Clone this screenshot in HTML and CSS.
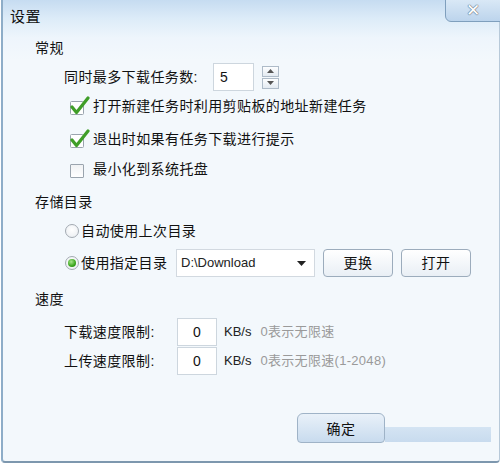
FILE: index.html
```html
<!DOCTYPE html>
<html lang="zh-CN">
<head>
<meta charset="utf-8">
<title>设置</title>
<link rel="stylesheet" href="styles.css">
</head>
<body>
<div class="window">
  <div class="close"><span class="x">✕</span></div>
  <div class="title">设置</div>

  <div class="heading">常规</div>
  <div class="row spin-row">
    <span class="label">同时最多下载任务数:</span>
    <div class="input num-left">5</div>
    <div class="spinner">
      <div class="spin-btn"><svg width="7" height="4" viewBox="0 0 7 4"><path d="M0 4 L3.5 0 L7 4 Z" fill="#555"/></svg></div>
      <div class="spin-btn"><svg width="7" height="4" viewBox="0 0 7 4"><path d="M0 0 L3.5 4 L7 0 Z" fill="#555"/></svg></div>
    </div>
  </div>
  <div class="row cb-row r1">
    <span class="check"><svg width="22" height="20" viewBox="0 0 22 20"><rect x="2.5" y="5.5" width="13" height="13" rx="1" fill="#fff" stroke="#9aa4ae"/><path d="M4 11 L8.5 16.5 L20 2" fill="none" stroke="#3f9e28" stroke-width="3.2" stroke-linecap="round" stroke-linejoin="round"/></svg></span>
    <span>打开新建任务时利用剪贴板的地址新建任务</span>
  </div>
  <div class="row cb-row r2">
    <span class="check"><svg width="22" height="20" viewBox="0 0 22 20"><rect x="2.5" y="5.5" width="13" height="13" rx="1" fill="#fff" stroke="#9aa4ae"/><path d="M4 11 L8.5 16.5 L20 2" fill="none" stroke="#3f9e28" stroke-width="3.2" stroke-linecap="round" stroke-linejoin="round"/></svg></span>
    <span>退出时如果有任务下载进行提示</span>
  </div>
  <div class="row cb-row r3">
    <span class="check"><span class="box"></span></span>
    <span>最小化到系统托盘</span>
  </div>

  <div class="heading h2">存储目录</div>
  <div class="row radio-row">
    <span class="radio"></span>
    <span>自动使用上次目录</span>
  </div>
  <div class="row radio-row rr2">
    <span class="radio on"><span class="dot"></span></span>
    <span class="rlabel">使用指定目录</span>
    <div class="select"><span>D:\Download</span><svg width="9" height="5" viewBox="0 0 9 5"><path d="M0 0 L4.5 5 L9 0 Z" fill="#222"/></svg></div>
    <div class="btn">更换</div>
    <div class="btn">打开</div>
  </div>

  <div class="heading h3">速度</div>
  <div class="row speed-row s1">
    <span class="label">下载速度限制:</span>
    <div class="input num-center">0</div>
    <span class="unit">KB/s</span>
    <span class="hint">0表示无限速</span>
  </div>
  <div class="row speed-row s2">
    <span class="label">上传速度限制:</span>
    <div class="input num-center">0</div>
    <span class="unit">KB/s</span>
    <span class="hint">0表示无限速(1-2048)</span>
  </div>

  <div class="footer">
    <div class="ok">确定</div>
    <div class="strip"></div>
  </div>
</div>
</body>
</html>
```
FILE: styles.css
```css
html, body {
  margin: 0;
  padding: 0;
  background: #ffffff;
}
body {
  width: 500px;
  height: 469px;
  overflow: hidden;
  font-family: "Liberation Sans", "Noto Sans CJK SC", sans-serif;
  font-size: 14px;
  letter-spacing: 0.4px;
  color: #111;
}
.window {
  position: relative;
  box-sizing: border-box;
  width: 499px;
  height: 463px;
  margin-left: 1px;
  border-left: 2px solid #8eadc8;
  border-bottom: 2px solid #7d97ae;
  border-right: 1px solid #b7c9d9;
  border-bottom-left-radius: 4px;
  border-bottom-right-radius: 4px;
  background: linear-gradient(#c6dcf1 0px, #dcebf8 18px, #eef5fc 38px, #f3f8fc 60px, #f3f8fc 100%);
}
.close {
  position: absolute;
  top: -1px;
  right: -2px;
  width: 56px;
  height: 23px;
  box-sizing: border-box;
  border: 1px solid #7f9fbd;
  border-bottom-left-radius: 6px;
  background: linear-gradient(#d9e8f6, #bcd4ec);
  display: flex;
  align-items: center;
  justify-content: center;
}
.close .x {
  color: #ffffff;
  font-family: "DejaVu Sans", sans-serif;
  font-size: 17px;
  font-weight: bold;
  line-height: 1;
  letter-spacing: 0;
  text-shadow: 0 0 1px #5f7080, 0 0 1px #5f7080, 0 0 1px #5f7080;
}
.title {
  height: 34px;
  line-height: 34px;
  padding-left: 7px;
  font-size: 15px;
}
.heading {
  height: 29px;
  line-height: 29px;
  padding-left: 32px;
  font-size: 14px;
}
.h2 { margin-top: 5px; }
.h3 { margin-top: 8px; }
.row {
  display: flex;
  align-items: center;
  height: 28px;
  line-height: 20px;
}
.spin-row { padding-left: 61px; }
.spin-row .label { width: 149px; }
.input {
  box-sizing: border-box;
  height: 28px;
  background: #ffffff;
  border: 1px solid #cdd6de;
  font-family: "Liberation Sans", sans-serif;
  font-size: 14px;
  letter-spacing: 0;
  display: flex;
  align-items: center;
}
.num-left {
  width: 41px;
  padding-left: 6px;
}
.spinner {
  margin-left: 8px;
  display: flex;
  flex-direction: column;
  gap: 1px;
}
.spin-btn {
  box-sizing: border-box;
  width: 17px;
  height: 11px;
  border: 1px solid #aebbc8;
  background: linear-gradient(#fdfeff, #e3eaf1);
  display: flex;
  align-items: center;
  justify-content: center;
}
.cb-row { padding-left: 65px; }
.r1 { margin-top: 1px; }
.r2 { margin-top: 5px; }
.r3 { margin-top: 2px; }
.check {
  width: 22px;
  height: 20px;
  margin-right: 3px;
  display: flex;
  align-items: flex-end;
}
.check svg { display: block; }
.box {
  box-sizing: border-box;
  width: 14px;
  height: 14px;
  margin-left: 2px;
  margin-bottom: 1px;
  border: 1px solid #9aa4ae;
  border-radius: 1px;
  background: linear-gradient(#f0f2f4, #ffffff);
}
.radio-row { padding-left: 62px; }
.rr2 { margin-top: 4px; }
.radio {
  box-sizing: border-box;
  width: 14px;
  height: 14px;
  border-radius: 50%;
  border: 1px solid #a3aab2;
  background: radial-gradient(circle at 50% 40%, #ffffff, #e8ecf0);
  margin-right: 2px;
  display: flex;
  align-items: center;
  justify-content: center;
}
.radio .dot {
  width: 8px;
  height: 8px;
  border-radius: 50%;
  background: radial-gradient(circle at 40% 35%, #a8e58c, #3aa51c 60%, #1e7d0c);
}
.rlabel { width: 95px; }
.select {
  box-sizing: border-box;
  width: 139px;
  height: 28px;
  background: #ffffff;
  border: 1px solid #d2d9e0;
  padding: 0 8px 0 4px;
  display: flex;
  align-items: center;
  justify-content: space-between;
  font-family: "Liberation Sans", sans-serif;
  font-size: 13px;
  letter-spacing: 0;
  color: #222;
}
.btn {
  box-sizing: border-box;
  width: 70px;
  height: 28px;
  margin-left: 8px;
  border: 1px solid #9cacbc;
  border-radius: 4px;
  background: linear-gradient(#ffffff, #e9eff5);
  display: flex;
  align-items: center;
  justify-content: center;
  font-size: 14px;
}
.speed-row { padding-left: 61px; }
.s1 { margin-top: 4px; }
.s2 { margin-top: 1px; }
.speed-row .label { width: 113px; }
.num-center {
  width: 40px;
  justify-content: center;
}
.unit {
  margin-left: 7px;
  font-family: "Liberation Sans", sans-serif;
  font-size: 13px;
  letter-spacing: 0;
  color: #222;
}
.hint {
  margin-left: 9px;
  font-size: 13px;
  letter-spacing: 0.3px;
  color: #9a9a9a;
}
.footer {
  margin-top: 38px;
  padding-left: 294px;
  display: flex;
  align-items: flex-end;
}
.ok {
  box-sizing: border-box;
  width: 88px;
  height: 30px;
  border: 1px solid #9fb3c7;
  border-radius: 6px 6px 4px 4px;
  background: linear-gradient(#e9f1f9, #c8dbee);
  display: flex;
  align-items: center;
  justify-content: center;
  font-size: 14px;
}
.strip {
  width: 106px;
  height: 15px;
  margin-bottom: 1px;
  background: linear-gradient(#d4e4f3, #c8dbee);
}
```
